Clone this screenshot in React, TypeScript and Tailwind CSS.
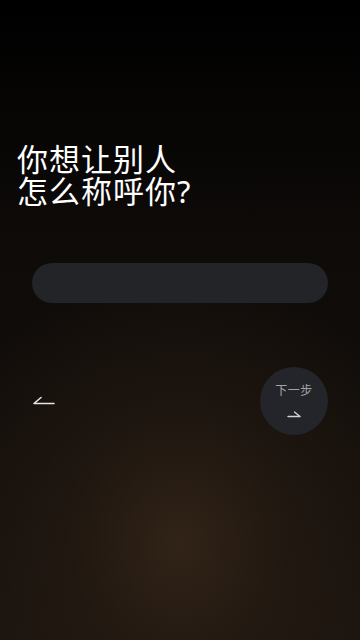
import React, { useState } from "react";

const HarpoonLeft: React.FC = () => (
  <svg width="24" height="12" viewBox="0 0 24 12" fill="none">
    <path d="M2 9.5 H22 M2 9.5 L9 3.5" stroke="#e5e5e5" strokeWidth="1.6" strokeLinecap="round" />
  </svg>
);

const HarpoonRight: React.FC = () => (
  <svg width="16" height="10" viewBox="0 0 16 10" fill="none">
    <path d="M2 7.5 H14 M14 7.5 L8.5 3" stroke="#d4d4d4" strokeWidth="1.4" strokeLinecap="round" />
  </svg>
);

const App: React.FC = () => {
  const [name, setName] = useState("");

  return (
    <div
      className="relative w-[360px] h-[640px] overflow-hidden bg-[linear-gradient(180deg,#000000_0%,#0d0a08_35%,#1a130e_100%)]"
      style={{ fontFamily: '"Noto Sans", "Noto Sans CJK SC", sans-serif' }}
    >
      <div className="h-full w-full flex flex-col bg-[radial-gradient(ellipse_70%_45%_at_50%_85%,rgba(52,37,24,0.9)_0%,rgba(40,29,20,0.5)_45%,rgba(0,0,0,0)_100%)]">
        {/* Title */}
        <h1 className="pt-[143px] pl-[17px] text-[31px] leading-[32px] text-white font-normal tracking-[1px]">
          你想让别人
          <br />
          怎么称呼你?
        </h1>

        {/* Input */}
        <div className="mt-[56px] px-[32px]">
          <input
            value={name}
            onChange={(e) => setName(e.target.value)}
            className="w-full h-[40px] rounded-full bg-[#222428] px-5 text-white text-base outline-none"
          />
        </div>

        {/* Nav */}
        <div className="mt-[64px] flex items-center justify-between pl-[32px] pr-[32px]">
          <button className="p-0 -mt-[2px]">
            <HarpoonLeft />
          </button>
          <button className="w-[68px] h-[68px] rounded-full bg-[#23252a] flex flex-col items-center justify-center">
            <span className="text-[12px] leading-[14px] text-[#a3a3a3] tracking-[0.5px]">下一步</span>
            <span className="mt-[11px]">
              <HarpoonRight />
            </span>
          </button>
        </div>
      </div>
    </div>
  );
};

export default App;
